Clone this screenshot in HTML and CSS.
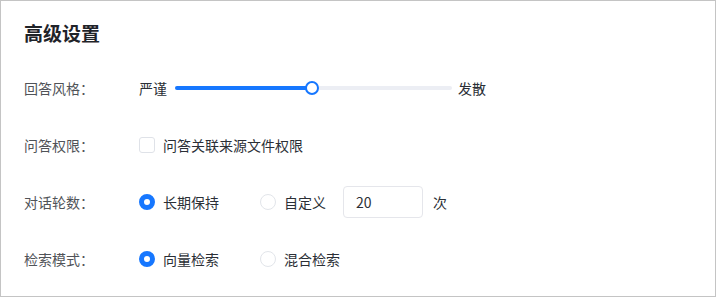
FILE: index.html
```html
<!DOCTYPE html>
<html lang="zh-CN">
<head>
  <meta charset="UTF-8" />
  <meta name="viewport" content="width=device-width, initial-scale=1.0" />
  <title>高级设置</title>
  <link rel="stylesheet" href="styles.css">
</head>
<body>
  <div class="panel">
    <h2 class="title">高级设置</h2>

    <div class="row">
      <span class="label">回答风格：</span>
      <div class="slider-wrap">
        <span class="text">严谨</span>
        <div class="slider">
          <div class="slider-fill" style="width: 49.6%"></div>
          <div class="slider-thumb" style="left: 49.6%"></div>
        </div>
        <span class="text">发散</span>
      </div>
    </div>

    <div class="row">
      <span class="label">问答权限：</span>
      <label class="option">
        <span class="checkbox"></span>
        <span class="text">问答关联来源文件权限</span>
      </label>
    </div>

    <div class="row">
      <span class="label">对话轮数：</span>
      <label class="option">
        <span class="radio checked"></span>
        <span class="text">长期保持</span>
      </label>
      <label class="option">
        <span class="radio"></span>
        <span class="text">自定义</span>
      </label>
      <input class="num-input" type="text" value="20">
      <span class="text unit">次</span>
    </div>

    <div class="row">
      <span class="label">检索模式：</span>
      <label class="option">
        <span class="radio checked"></span>
        <span class="text">向量检索</span>
      </label>
      <label class="option">
        <span class="radio"></span>
        <span class="text">混合检索</span>
      </label>
    </div>
  </div>
</body>
</html>
```

FILE: styles.css
```css
body {
  margin: 0;
  font-family: "Noto Sans CJK SC", "Noto Sans", sans-serif;
  background: #fff;
}
.panel {
  box-sizing: border-box;
  width: 716px;
  height: 297px;
  border: 1px solid #c4c4c4;
  padding: 18px 23px;
}
.title {
  margin: 0 0 25px;
  font-size: 19px;
  line-height: 28px;
  font-weight: 600;
  color: #1f2329;
}
.row {
  display: flex;
  align-items: center;
  height: 32px;
  margin-bottom: 25px;
}
.label {
  width: 115px;
  font-size: 14px;
  color: #505358;
}
.text {
  font-size: 14px;
  color: #2b2f36;
}
.slider-wrap {
  display: flex;
  align-items: center;
}
.slider {
  position: relative;
  width: 277px;
  height: 4px;
  margin: 0 6px 0 8px;
  background: #eceef4;
  border-radius: 2px;
}
.slider-fill {
  height: 100%;
  background: #1677ff;
  border-radius: 2px;
}
.slider-thumb {
  position: absolute;
  top: 50%;
  width: 10px;
  height: 10px;
  border: 2px solid #1677ff;
  background: #fff;
  border-radius: 50%;
  transform: translate(-50%, -50%);
}
.option {
  display: flex;
  align-items: center;
  margin-right: 41px;
}
.option:last-child {
  margin-right: 0;
}
.checkbox {
  box-sizing: border-box;
  width: 16px;
  height: 16px;
  border: 1px solid #dfe2e8;
  border-radius: 3px;
  margin-right: 8px;
}
.radio {
  box-sizing: border-box;
  width: 16px;
  height: 16px;
  border: 1px solid #e2e5ea;
  border-radius: 50%;
  margin-right: 8px;
  background: #fff;
}
.radio.checked {
  border: 5px solid #1677ff;
}
.num-input {
  box-sizing: border-box;
  width: 80px;
  height: 32px;
  margin-left: -24px;
  padding: 0 12px;
  border: 1px solid #e5e6eb;
  border-radius: 4px;
  font-family: inherit;
  font-size: 14px;
  color: #2b2f36;
  outline: none;
}
.unit {
  margin-left: 10px;
}
```
